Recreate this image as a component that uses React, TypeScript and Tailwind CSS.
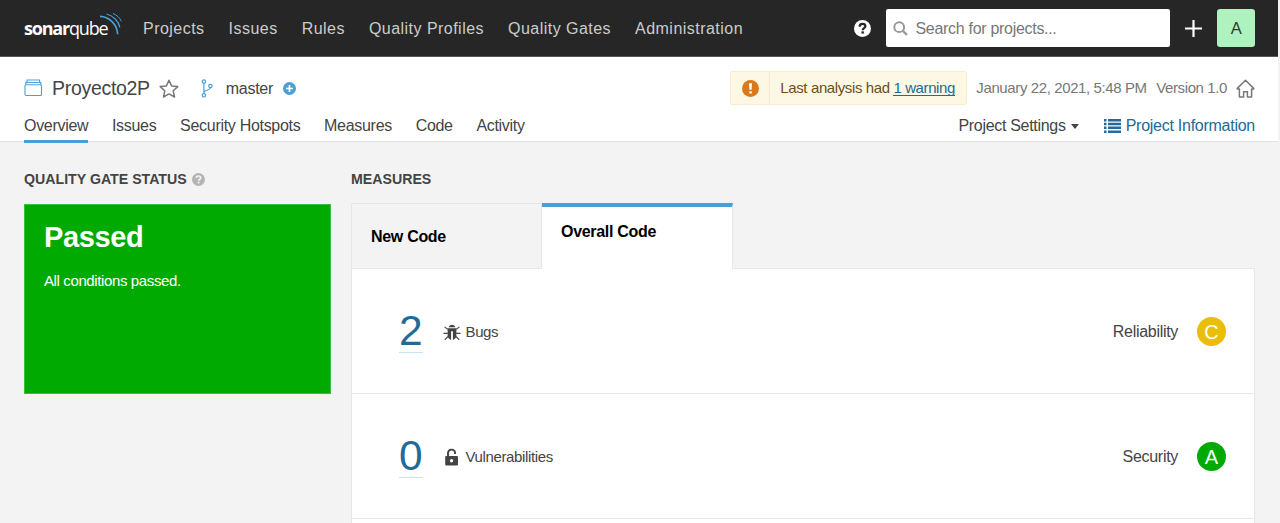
import type { ReactNode } from "react";

const NAV = ["Projects", "Issues", "Rules", "Quality Profiles", "Quality Gates", "Administration"];
const TABS = ["Overview", "Issues", "Security Hotspots", "Measures", "Code", "Activity"];

function Logo() {
  return (
    <div className="flex w-[119px] items-start">
      <div className="flex h-[29px] items-center pt-[5px] font-['Open_Sans',sans-serif] text-[18px] leading-none text-white">
        <span className="w-[45px] font-bold tracking-[-1.2px]">sonar</span>
        <span className="w-[38px] tracking-[-1.200px]">qube</span>
      </div>
      <svg className="-ml-[7px] h-[24px] w-[24px] shrink-0" viewBox="0 0 24 24" fill="none" stroke="#4b9fd5">
        <path d="M0 5.300C8.500 5.500 17 12.500 17.700 23.300" strokeWidth="1.700" />
        <path d="M6.500 3C13.300 4.700 18.700 10.300 19.800 16.300" strokeWidth="1.200" />
        <path d="M13 2.500C17.200 4.300 19.800 6.800 21.300 10.300" strokeWidth="1" />
      </svg>
    </div>
  );
}

function HelpIcon({ size, fill, mark }: { size: number; fill: string; mark: string }) {
  return (
    <svg className="shrink-0" width={size} height={size} viewBox="0 0 16 16">
      <circle cx="8" cy="8" r="8" fill={fill} />
      <path d="M5.300 6.300C5.300 4.500 6.500 3.700 8 3.700s2.700.9 2.700 2.200c0 1.800-2.500 1.900-2.500 3.700" fill="none" stroke={mark} strokeWidth="2.100" />
      <rect x="7" y="10.700" width="2.300" height="2.100" fill={mark} />
    </svg>
  );
}

function BugIcon() {
  return (
    <svg className="h-[18px] w-[18px] shrink-0" viewBox="0 0 18 18">
      <path d="M5.600 4.300a3.500 3.500 0 0 1 6.800 0z" fill="#444" />
      <path d="M4.600 5.200h8.800v7.300c0 2.200-1.700 4-3.500 4.400V8.300H8.100v8.600c-1.800-.4-3.500-2.200-3.500-4.400z" fill="#444" />
      <path d="M1.600 3.900l3.200 2.500M.5 10.300h4.300M1.800 16.800l3.300-3.400M16.400 3.900l-3.200 2.500M17.500 10.300h-4.300M16.200 16.800l-3.300-3.400" fill="none" stroke="#444" strokeWidth="1.200" />
    </svg>
  );
}

function LockIcon() {
  return (
    <svg className="h-[18px] w-[18px] shrink-0" viewBox="0 0 18 18">
      <path d="M5 8.500V4.900a3.600 3.600 0 0 1 7.100-.5v1.600" fill="none" stroke="#444" strokeWidth="1.900" />
      <path fillRule="evenodd" d="M3.300 8h10.600a1.100 1.100 0 0 1 1.100 1.100v7.300a1.100 1.100 0 0 1-1.100 1.100H3.300a1.100 1.100 0 0 1-1.100-1.100V9.100A1.100 1.100 0 0 1 3.300 8zm5.300 3.100a1.700 1.700 0 1 0 0 3.400 1.700 1.700 0 0 0 0-3.400z" fill="#444" />
    </svg>
  );
}

function MeasureRow({ value, icon, label, domain, rating, color }: {
  value: string; icon: ReactNode; label: string; domain: string; rating: string; color: string;
}) {
  return (
    <div className="flex h-[125px] shrink-0 items-center border-b border-[#e6e6e6] pt-[1px] pr-[28px] pl-[47px]">
      <a className="h-[43px] w-[24px] border-b border-[#cae3f2] text-[42.500px] leading-[42px] tracking-normal text-[#236a97]">{value}</a>
      <div className="ml-[19.500px] flex items-center gap-[5px] text-[15px] tracking-[-0.370px]">
        {icon}
        <span>{label}</span>
      </div>
      <span className="ml-auto pt-[1px]">{domain}</span>
      <span className={`ml-[19px] flex h-[29px] w-[29px] items-center justify-center rounded-full text-[20px] leading-none tracking-normal text-white ${color}`}>{rating}</span>
    </div>
  );
}

export default function App() {
  return (
    <div className="flex h-[523px] w-[1280px] flex-col overflow-hidden bg-[#f3f3f3] font-['Liberation_Sans',Arial,sans-serif] text-[16px] leading-[20px] tracking-[-0.300px] whitespace-nowrap text-[#444]">
      <header className="flex h-[57px] w-[1278px] shrink-0 items-center border-b border-[#555] bg-[#262626] pl-[24px]">
        <div className="flex h-[34px] items-start"><Logo /></div>
        <nav className="flex gap-[24px] pt-[1px] tracking-[0.470px] text-[#ccc]">
          {NAV.map((n) => <a key={n}>{n}</a>)}
        </nav>
        <div className="mr-[23px] ml-auto flex items-center">
          <HelpIcon size={17} fill="#fff" mark="#262626" />
          <div className="ml-[15px] flex h-[38px] w-[284px] items-center rounded-[2px] bg-white pl-[7px] text-[#777]">
            <svg className="h-[15px] w-[15px]" viewBox="0 0 15 15" fill="none" stroke="#999" strokeWidth="2">
              <circle cx="6.200" cy="6.200" r="4.900" />
              <path d="M9.800 9.800l4.200 4.200" strokeWidth="2.300" />
            </svg>
            <span className="ml-[7.500px] pt-[1px]">Search for projects...</span>
          </div>
          <svg className="ml-[15px] h-[17px] w-[17px]" viewBox="0 0 17 17" stroke="#fff" strokeWidth="2.200">
            <path d="M8.500 0v17M0 8.500h17" />
          </svg>
          <div className="ml-[15px] flex h-[38px] w-[38px] items-center justify-center rounded-[3px] bg-[#aef2bf] text-[16.500px] text-[#2b3d30]">A</div>
        </div>
      </header>

      <section className="flex h-[85px] w-[1278px] shrink-0 flex-col border-b border-[#e2e2e2] bg-white pr-[23px] pl-[24px]">
        <div className="mt-[13px] flex h-[36px] items-center pt-[1px]">
          <svg className="h-[18px] w-[19px]" viewBox="0 0 19 18" fill="none" stroke="#4b9fd5" strokeWidth="1.100">
            <rect x="1" y="5.800" width="16.500" height="10.700" rx="1" />
            <path d="M1.800 5.800V3.500h15v2.300M3 3.500V1h12.600v2.500" />
          </svg>
          <span className="ml-[9px] text-[19.500px]">Proyecto2P</span>
          <svg className="ml-[9px] h-[19px] w-[20px]" viewBox="0 0 20 19" fill="none" stroke="#777" strokeWidth="1.500" strokeLinejoin="round">
            <path d="M10 1.200l2.600 5.700 6.200.7-4.600 4.200 1.300 6.200L10 14.900 4.500 18l1.300-6.200L1.200 7.600l6.200-.7z" />
          </svg>
          <svg className="ml-[22px] h-[19px] w-[12px]" viewBox="0 0 12 19" fill="none" stroke="#4b9fd5" strokeWidth="1.200">
            <circle cx="2.900" cy="2.500" r="1.700" />
            <circle cx="2.900" cy="16.300" r="1.700" />
            <circle cx="9.400" cy="7" r="1.700" />
            <path d="M2.900 4.200v10.400M9.400 8.700c0 2.800-6.500 1.900-6.500 5.300" />
          </svg>
          <span className="ml-[13px] pt-[1px]">master</span>
          <svg className="ml-[10px] h-[13px] w-[13px]" viewBox="0 0 13 13">
            <circle cx="6.500" cy="6.500" r="6.500" fill="#4b9fd5" />
            <path d="M6.500 3v7M3 6.500h7" stroke="#fff" strokeWidth="1.700" />
          </svg>
          <div className="ml-auto flex items-center text-[15px] tracking-[-0.390px] text-[#777]">
            <div className="flex h-[34px] w-[237px] items-center rounded-[2px] border border-[#faebcc] bg-[#fcf8e3] text-[#6f4f17]">
              <div className="flex h-full w-[39px] items-center justify-center border-r border-[#f7ebcd]">
                <svg className="h-[17px] w-[17px]" viewBox="0 0 17 17">
                  <circle cx="8.500" cy="8.500" r="8.500" fill="#db781a" />
                  <path d="M7 3.200h3l-.4 6.500H7.400zM7.300 11.200h2.500v2.400H7.300z" fill="#fff" />
                </svg>
              </div>
              <span className="ml-[10px]">Last analysis had <a className="inline-block h-[17px] border-b border-[#236a97] leading-[17px] text-[#236a97]">1 warning</a></span>
            </div>
            <span className="ml-[9px]">January 22, 2021, 5:48 PM</span>
            <span className="ml-[9.500px]">Version 1.0</span>
            <svg className="ml-[9px] h-[19px] w-[19px]" viewBox="0 0 19 19" fill="none" stroke="#777" strokeWidth="1.500" strokeLinejoin="round">
              <path d="M.8 9.900l8.700-8.700 8.700 8.700M.8 9.900h2.600v8.200h4.200v-5.300h3.800v5.300h4.200V9.900h2.600" />
            </svg>
          </div>
        </div>
        <div className="flex h-[37px] items-start justify-between">
          <nav className="flex gap-[23.700px]">
            {TABS.map((t, i) => (
              <a key={t} className={`h-[38px] shrink-0 pt-[11px] ${i === 0 ? "border-b-3 border-[#4b9fd5]" : ""}`}>{t}</a>
            ))}
          </nav>
          <div className="flex items-center pt-[11px]">
            <span>Project Settings</span>
            <span className="ml-[5px] border-x-[4.500px] border-t-[5px] border-x-transparent border-t-[#444]" />
            <svg className="ml-[25px] h-[14px] w-[17px]" viewBox="0 0 17 14" fill="#236a97">
              <path d="M0 0h2.500v2.500H0zM4 0h13v2.500H4zM0 3.800h2.500v2.500H0zM4 3.800h13v2.500H4zM0 7.600h2.500v2.500H0zM4 7.600h13v2.500H4zM0 11.400h2.500v2.500H0zM4 11.400h13v2.500H4z" />
            </svg>
            <a className="ml-[5px] tracking-[-0.260px] text-[#236a97]">Project Information</a>
          </div>
        </div>
      </section>

      <main className="flex gap-[20px] pt-[27px] pl-[24px]">
        <section className="w-[307px]">
          <h2 className="flex items-center gap-[5px] text-[14.180px] font-bold tracking-normal">QUALITY GATE STATUS <HelpIcon size={13} fill="#b4b4b4" mark="#f3f3f3" /></h2>
          <div className="mt-[15px] flex h-[190px] flex-col border border-[#3dbb3d] bg-[#0a0] pt-[14px] pl-[19px] text-white">
            <strong className="text-[29px] leading-[36px] tracking-[-0.350px]">Passed</strong>
            <span className="mt-[16px] text-[15px] tracking-[-0.380px]">All conditions passed.</span>
          </div>
        </section>
        <section className="w-[904px]">
          <h2 className="text-[14.180px] font-bold tracking-normal">MEASURES</h2>
          <div className="mt-[14px] flex h-[66px] font-bold text-black">
            <div className="w-[191px] border border-[#e6e6e6] pt-[23px] pl-[19px]">New Code</div>
            <div className="w-[191px] border-t-4 border-r border-t-[#4b9fd5] border-r-[#e6e6e6] bg-white pt-[15px] pl-[19px]">Overall Code</div>
            <div className="flex-1 border-b border-[#e6e6e6]" />
          </div>
          <div className="flex h-[300px] flex-col border-x border-[#e6e6e6] bg-white">
            <MeasureRow value="2" icon={<BugIcon />} label="Bugs" domain="Reliability" rating="C" color="bg-[#eabe06]" />
            <MeasureRow value="0" icon={<LockIcon />} label="Vulnerabilities" domain="Security" rating="A" color="bg-[#0a0]" />
          </div>
        </section>
      </main>
    </div>
  );
}
